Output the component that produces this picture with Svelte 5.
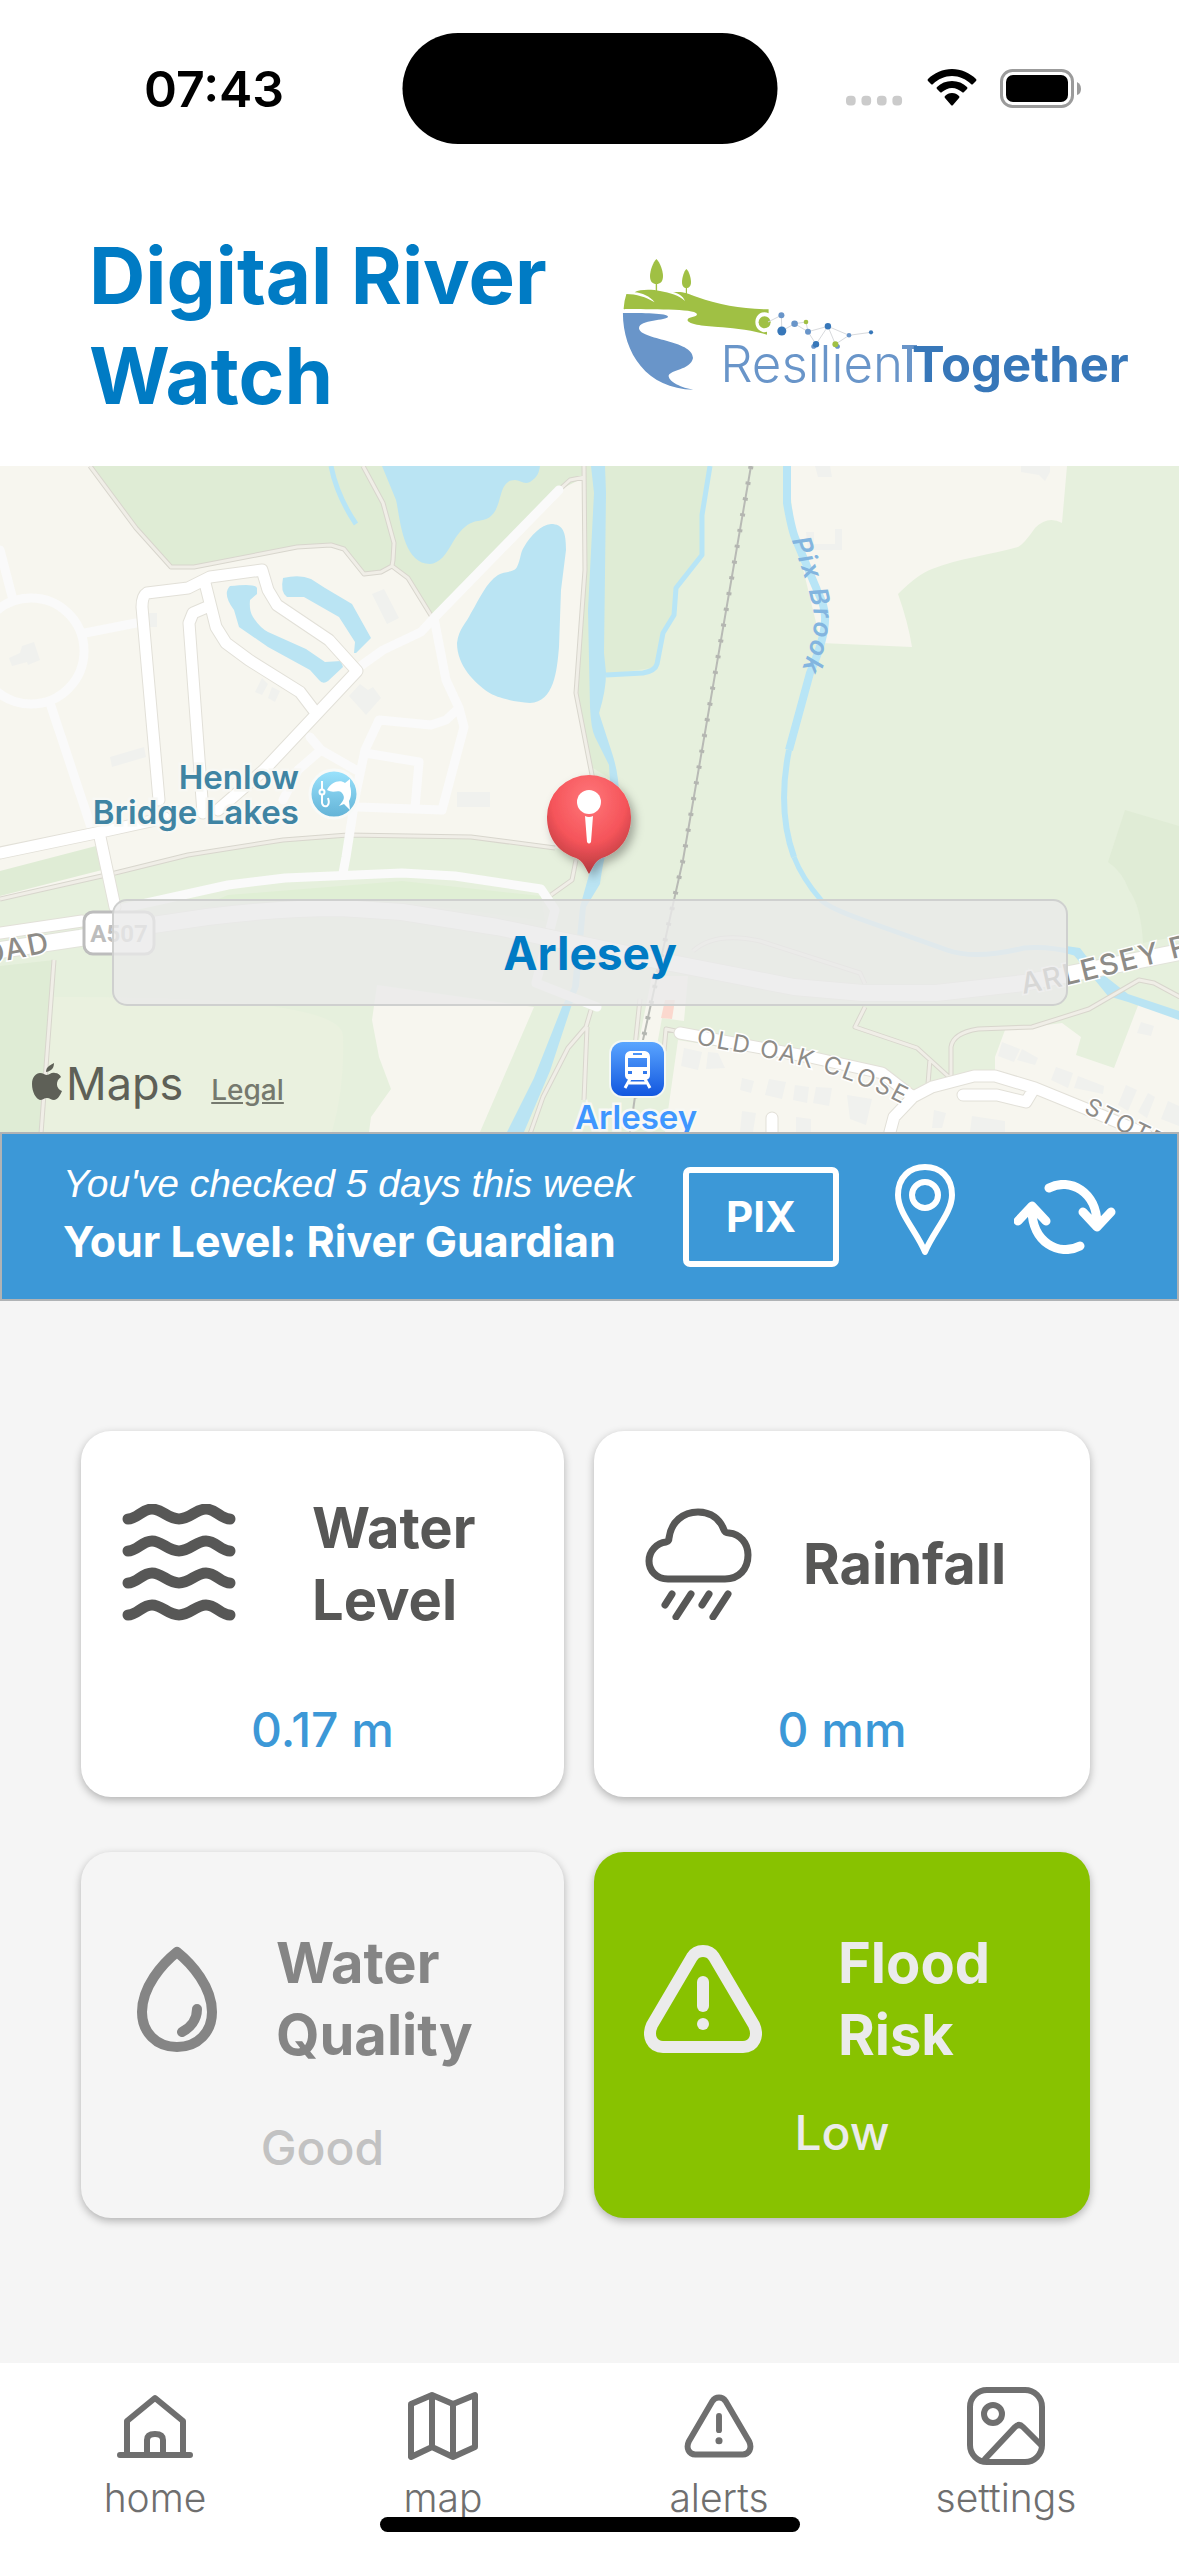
<script lang="ts">
	type Card = { id: string; lines: string[]; value: string };

	const cards: Card[] = [
		{ id: "level",    lines: ["Water", "Level"],   value: "0.17 m" },
		{ id: "rain",     lines: ["Rainfall"],         value: "0 mm" },
		{ id: "quality",  lines: ["Water", "Quality"], value: "Good" },
		{ id: "flood",    lines: ["Flood", "Risk"],    value: "Low" }
	];

	const tabs = ["home", "map", "alerts", "settings"];

	let daysChecked = $state(5);
	let level       = $state("River Guardian");
	let place       = $state("Arlesey");

	// logo network: x, y, radius, tone
	const nodes: [number, number, number, string][] = [
		[159.4, 60.3, 3, "light"],
		[159.8, 76, 4.5, "dark"],
		[172.6, 68.7, 3.3, "light"],
		[184, 67, 2.3, "leaf"],
		[186, 76.7, 3, "light"],
		[194, 89.3, 3.2, "dark"],
		[205.9, 71.3, 3.2, "dark"],
		[213.4, 89.3, 3, "leaf"],
		[227, 80.3, 2.3, "light"],
		[249, 77.3, 2.1, "dark"]
	];

	const casedRoads = [
		"M0 387L96 367L165 352",
		"M159 334L142 141Q142 130 147 127L188 122L210 111L262 104L268 124L277 139L329 174L357 205L264 304L218 344",
		"M205 117L216 161L226 177L249 194L300 226L316 247",
		"M207 141L193 147L189 157L203 347",
		"M100 371L115 441",
		"M680 567L810 591L882 607L913 631",
		"M890 666L894 651L913 631L932 621L974 610H995L1035 622L1089 644L1146 668",
		"M963 629H997L1026 636L1032 626",
		"M772 652V670",
		"M0 467L82 455"
	];

	const lightRoads = [
		"M0 84L13 134",
		"M85 167L136 157",
		"M50 237L92 364",
		"M559 24L434 152L421 166L383 184L362 199",
		"M434 152L446 214L459 242L464 261L442 344L358 341",
		"M459 242L446 254L431 259L379 254L365 284L356 327L346 391L343 407",
		"M365 287L419 296L415 342",
		"M310 271L321 284L356 304M321 284L298 304L283 334",
		"M115 444L228 419L285 412L402 407L455 410L541 423L555 444L536 517L597 541"
	];

	const tracks = [
		"M90 0L136 62L171 101H194L297 81L331 79L344 83L364 108L381 106L392 100L408 112L432 151",
		"M363 0L383 37L394 77L393 94L392 100",
		"M559 24L570 14L585 11M584 0L585 104L576 227L593 314",
		"M0 433L115 407L188 389L283 374L348 369L471 371L555 382",
		"M576 394L572 414L551 429",
		"M54 494L41 668",
		"M591 544L586 561L568 582L543 631L530 668M587 561L584 634",
		"M865 541L855 561L917 582L949 611M930 593L928 618",
		"M951 611V581Q953 567 978 563L1032 561L1089 543L1139 514L1154 517L1180 531",
		"M693 485Q715 465 760 475L860 507L865 518",
		"M640 533L633 600M680 566L666 563L664 585"
	];

	const buildings = [
		"M9 192L20 187L22 180L34 176L40 194L28 199L27 196L12 200Z",
		"M147 147H157V161H147Z",
		"M110 291L144 281L146 291L112 301Z",
		"M372 128L384 123L399 152L387 158Z",
		"M262 212L268 218L262 229L255 226ZM272 221L280 225L275 236L268 232Z",
		"M349 230L360 218L368 224L373 221L381 232L366 249Z",
		"M457 326H490V341H457Z",
		"M815 0H830L832 11H818ZM1021 0H1050V6L1045 15L1039 9L1021 6Z",
		"M806 66H814V78H835V63H842V84H808Z",
		"M684 582L702 586L698 604L681 600ZM708 586L718 587L725 602L706 603Z",
		"M742 612L754 615L751 627L740 624ZM769 613L786 616L782 633L765 629ZM795 619L809 621L807 637L793 634ZM816 621L832 622L829 640L813 637Z",
		"M847 629L872 633L866 659L850 653ZM742 645L756 647L753 666H740ZM796 651L811 653V666H796Z",
		"M1002 576L1020 583L1014 596L998 590ZM1022 583L1038 592L1035 599L1017 594Z",
		"M1056 601L1073 607L1068 622L1051 614ZM1078 610L1104 620L1103 628L1074 622Z",
		"M1126 619L1137 624L1128 645L1118 639ZM1148 627L1155 631L1147 652L1138 646ZM1168 635L1179 640V660L1161 653Z",
		"M1141 556L1154 560L1151 570L1137 567ZM934 644L946 647L942 662H932ZM972 650L1005 655V666H970Z"
	];
</script>

{#snippet cardIcon(id: string)}
	{#if id === "level"}
		<svg class="icon-level" viewBox="0 0 114 120" aria-hidden="true">
			{#each [15, 47, 79, 111] as y}
				<path d="M6 {y}C15 {y} 20 {y - 10} 30 {y - 10}C40 {y - 10} 46 {y} 57 {y}S74 {y - 10} 84 {y - 10}S99 {y} 108 {y}" />
			{/each}
		</svg>
	{:else if id === "rain"}
		<svg class="icon-rain" viewBox="0 0 108 112" aria-hidden="true">
			<path d="M23 71C11 71 4 62 4 53C4 43 12 35 21 34Q24 33 24 30C26 14 38 4 53 4C66 4 75 11 79 22Q80 25 84 25C95 26 103 35 103 47C103 61 94 71 80 71Z" />
			<path d="M27 86L20 97M46 86L31 109M64 86L57 97M83 86L68 109" />
		</svg>
	{:else if id === "quality"}
		<svg class="icon-quality" viewBox="0 0 82 107" aria-hidden="true">
			<path d="M41 6C56 18 76 41 76 66C76 86 62 101 41 101S6 86 6 66C6 41 26 18 41 6Z" />
			<path d="M61 63C61 74 54 82 46 86" />
		</svg>
	{:else}
		{@render warning("icon-flood")}
	{/if}
{/snippet}

{#snippet warning(name: string)}
	<svg class={name} viewBox="0 0 118 108" aria-hidden="true">
		<path d="M48 12C53 4 65 4 70 12L110 80C115 91 110 102 99 102H19C8 102 3 91 8 80Z" />
		<path d="M59 37V61" />
		<circle cx="59" cy="79" r="6" />
	</svg>
{/snippet}

<div class="screen">
	<!-- status bar -->
	<div class="status">
		<time class="clock">07:43</time>
		<div class="island"></div>
		<div class="signals">
			<svg class="dots" viewBox="0 0 60 38" aria-hidden="true">
				{#each [0, 16, 32, 48] as x}
					<rect {x} y="27" width="10" height="10" rx="4" />
				{/each}
			</svg>
			<svg class="wifi" viewBox="0 0 50 38" aria-hidden="true">
				<path d="M25 0C34 0 43 4 49 10Q50 11 49 12L46 15Q45 16 44 15C39 10 32 7 25 7S11 10 6 15Q5 16 4 15L1 12Q0 11 1 10C7 4 16 0 25 0Z" />
				<path d="M25 12C31 12 36 14 40 18Q41 19 40 20L37 23Q36 24 35 23C32 21 29 19 25 19S18 21 15 23Q14 24 13 23L10 20Q9 19 10 18C14 14 19 12 25 12Z" />
				<path d="M25 24C28 24 30 25 32 27Q33 28 32 29L26 36Q25 37 24 36L18 29Q17 28 18 27C20 25 22 24 25 24Z" />
			</svg>
			<svg class="battery" viewBox="0 0 82 40" aria-hidden="true">
				<rect x="1.5" y="1.5" width="71" height="36" rx="11" fill="none" stroke="#9b9b9b" stroke-width="3" />
				<rect x="6" y="6" width="62" height="27" rx="7" />
				<path d="M77 13Q81 15 81 20T77 26Z" fill="#9b9b9b" />
			</svg>
		</div>
	</div>

	<header class="header">
		<h1>Digital River Watch</h1>
		<svg class="logo" viewBox="0 0 510 145" role="img" aria-label="ResilienTogether">
			<g class="leaf">
				<path d="M34.4 4C38 7 41 16 41 21C41 27 38 29 34.4 29S28 27 28 21C28 16 31 7 34.4 4Z" />
				<path d="M64.4 14C67 16 69 23 69 27C69 31 67 33 64.4 33S60 31 60 27C60 23 62 16 64.4 14Z" />
				<path d="M33.7 28H35.1V37H33.7ZM63.8 32H65V39H63.8Z" />
				<path d="M4.4 39C14 39 24 42 32.6 47.3C28 41 20 38 12.6 37.3C18 34 31 34.5 38 36C48 38 57 40 63 46C61 41 56 38 51 37.3C59 36 65 38 75 42C98 50 120 54 146.6 54.3V58.3A9 10 0 1 0 145 76.7V79.7C126 74 108 73 96 72C80 71 66 69 65.5 65C66 61 75 63 75 59C72 53 28 55 1.6 54Q2 46 4.4 39Z" />
				<circle cx="142.6" cy="67.3" r="6" />
			</g>
			<path class="light" d="M.9 58C20 58 46 58 46 61.7C45 66 17 64 17 73.3C18 85 71 85 71 103C69 115 47 115 46.6 121C47 127 60 133 71.5 134.7C25 134 .9 98 .9 58Z" />
			<path class="links" d="M146 67L159.4 60.3L159.8 76L172.6 68.7L184 67L186 76.7L172.6 68.7M186 76.7L194 89.3L205.9 71.3L186 76.7M205.9 71.3L213.4 89.3L227 80.3L205.9 71.3M227 80.3L249 77.3" />
			<text class="logo-thin light" x="281" y="127">Resilien</text>
			<path class="light" d="M280 90H295V94H290V127H285V94H280Z" />
			<text class="logo-bold dark" x="290" y="127">Together</text>
			{#each nodes as [cx, cy, r, tone]}
				<circle {cx} {cy} {r} class={tone} />
			{/each}
		</svg>
	</header>

	<!-- map -->
	<section class="map" aria-label="Map of {place}">
		<svg class="tiles" viewBox="0 0 1179 666" preserveAspectRatio="xMidYMid slice" aria-hidden="true">
			<defs>
				<radialGradient id="pinFill" cx=".5" cy=".25" r=".8">
					<stop offset="0" stop-color="#ff777a" />
					<stop offset=".55" stop-color="#f5545a" />
					<stop offset="1" stop-color="#a63338" />
				</radialGradient>
				<linearGradient id="lakeFill" x2="0" y2="1">
					<stop offset="0" stop-color="#9be3fd" />
					<stop offset="1" stop-color="#62b2d6" />
				</linearGradient>
				<linearGradient id="railFill" x2="0" y2="1">
					<stop offset="0" stop-color="#5aa5ff" />
					<stop offset="1" stop-color="#1257df" />
				</linearGradient>
				<filter id="pinShadow" x="-30%" y="-30%" width="180%" height="180%">
					<feDropShadow dx="4" dy="5" stdDeviation="5" flood-opacity=".3" />
				</filter>
				<path id="brookLine" d="M792 74C799 98 810 122 814 150C815 172 806 194 794 222" />
				<path id="oakLine" d="M696 578C750 590 830 596 916 646" />
				<path id="stotLine" d="M1083 646C1110 660 1140 675 1260 735" />
				<path id="arleseyLine" d="M1023 528C1070 520 1110 508 1280 466" />
				<path id="roadLine" d="M-36 503L60 484" />
			</defs>

			<!-- land -->
			<rect width="1179" height="666" fill="#f7f6ef" />
			<path fill="#dfecd5" d="M90 0L136 62L171 101H194L297 81L331 79L344 83L364 108L381 106L392 100L408 112L432 151L559 24L585 11V0Z" />
			<path fill="#e6f0dd" d="M585 0H1179V666H0V433L115 407L188 389L283 374L348 369L471 371L555 382L593 390V314L576 227L585 104Z" />
			<path fill="#dfecd5" d="M585 0H710L702 49V89L676 122L674 149L663 167L657 201L606 209L599 250L612 314L590 300L577 227L585 104Z" />
			<path fill="#dfecd5" d="M0 405L96 380L102 404L0 430ZM0 500L54 494L41 666H0Z" />
			<path fill="#e0efd5" d="M228 429L402 415L541 430L545 455L402 436L200 441Z" />
			<path fill="#eaf1df" d="M54 531C180 531 343 535 343 570Q345 620 332 666H41Z" />
			<path fill="#e0ecd6" d="M1125 344L1179 360V470L1143 477Q1141 440 1129 424Q1122 405 1108 396Z" />
			<path fill="#f7f6ef" d="M787 0H1067L1062 57Q1048 49 1035 62Q1024 78 1018 81C990 89 960 92 932 103Q918 108 898 128Q908 156 912 181L821 177L796 74Z" />
			<path fill="#f7f6ef" d="M377 519L534 541L480 666H369L371 651L391 623L379 591L372 554Z" />
			<path fill="#f7f6ef" d="M678 574L882 607L913 631L947 614L995 604V591L1005 564L1062 557L1081 571L1076 589L1114 602L1139 537L1179 551V666H665Z" />
			<path fill="#f7f6ef" d="M652 510H688L684 555L662 552L655 590H636Z" />
			<path fill="#fbd8ce" d="M665 534H675L672 553L661 552Z" />
			<path fill="#f0f1ee" d={buildings.join("")} />

			<!-- water -->
			<g fill="#bae4f3">
				<path d="M382 0L396 34C400 50 402 98 430 98C448 96 450 73 465 61C475 52 485 57 492 49C503 38 498 14 515 14C520 14 524 19 530 16C538 11 539 6 540 0Z" />
				<path d="M551 58C563 58 566 66 566 84L561 124L559 181C557 205 554 236 530 237C515 236 497 232 488 226C475 217 457 200 457 177C459 162 466 158 471 147C480 132 486 117 498 109C504 105 514 107 517 101C521 93 520 87 524 81C531 69 541 59 551 58Z" />
				<path d="M230 120Q256 117 257 122V128L250 134Q249 145 253 151Q260 162 268 166L306 183L325 196L341 195L343 201L328 215Q323 219 319 214L310 204L268 181L239 161L234 144Q222 128 230 120Z" />
				<path d="M283 112Q300 108 311 113L325 122L352 138L371 172L356 187H354L355 176L339 151L304 131H287Q280 126 283 112Z" />
				<path d="M591 0L594 27L588 144L590 241Q591 263 595 271L609 299L611 330L580 441L572 521L562 541L534 612L507 666H524L550 605L571 541L579 520L586 441L600 418Q603 395 606 388L619 330Q619 308 612 287L599 247Q606 225 606 207L604 187L606 27L605 0Z" />
				<path d="M1066 480L1080 482L1096 503L1128 528L1179 545V554L1128 536L1108 530L1090 508Z" />
			</g>
			<g class="stream">
				<path d="M331 0Q337 30 356 58M710 0L702 49V89L676 122L674 149L663 167L657 198Q655 205 643 207L606 209" stroke-width="5" />
				<path d="M787 0V37Q792 66 796 74L817 124Q825 140 825 151Q826 170 810 207L789 284" stroke-width="8" />
				<path d="M789 284Q777 344 794 391" stroke-width="6" />
				<path d="M794 391Q802 412 821 434Q829 442 863 454L947 484Q975 494 1024 482Q1050 480 1075 487" stroke-width="5" />
			</g>

			<!-- tracks and roads -->
			<path class="track-case" d={tracks.join("")} />
			<path class="track" d={tracks.join("")} />
			<path class="road-light" d={lightRoads.join("")} />
			<circle class="road-light" cx="31" cy="185" r="53" />
			<path class="road-case" d={casedRoads.join("")} />
			<path class="road" d={casedRoads.join("")} />
			<path class="main-case" d="M0 484L80 472L153 459L207 451Q280 442 340 442L402 446L497 461L656 494L794 521L863 527H936L1024 517L1180 486" />
			<path class="main" d="M0 484L80 472L153 459L207 451Q280 442 340 442L402 446L497 461L656 494L794 521L863 527H936L1024 517L1180 486" />
			<path class="rail" d="M751 0L683 394L674 434L643 574L630 666" />
			<path class="sleepers" d="M751 0L683 394L674 434L643 574L630 666" />

			<!-- road and river names -->
			<text class="brook-name"><textPath href="#brookLine">Pix Brook</textPath></text>
			<text class="road-name"><textPath href="#oakLine">OLD OAK CLOSE</textPath></text>
			<text class="road-name"><textPath href="#stotLine">STOTFOLD</textPath></text>
			<text class="road-name strong"><textPath href="#arleseyLine">ARLESEY ROAD</textPath></text>
			<text class="road-name strong"><textPath href="#roadLine">ROAD</textPath></text>
			<rect x="84" y="446" width="70" height="42" rx="9" fill="#fff" stroke="#bdbdbd" stroke-width="3" />
			<text class="shield" x="119" y="476">A507</text>

			<!-- Henlow Bridge Lakes -->
			<text class="lake-name" x="299" y="323">Henlow</text>
			<text class="lake-name" x="299" y="358">Bridge Lakes</text>
			<circle cx="334" cy="328" r="24" fill="url(#lakeFill)" stroke="#f8faf8" stroke-width="3" />
			<path fill="#fff" d="M327 324C331 316 340 313 345 317L350 313V320C352 326 351 332 349 335L350 344L344 338L339 340C343 335 346 332 342 327C338 323 334 328 327 324Z" />
			<path fill="none" stroke="#fff" stroke-width="2" d="M322 315V323M322 328V337Q323 341 327 340Q330 338 328 332" />
			<circle cx="322" cy="326" r="2.5" fill="none" stroke="#fff" stroke-width="2" />

			<!-- pin -->
			<g filter="url(#pinShadow)">
				<path fill="url(#pinFill)" d="M589 408C585 401 583 395 576 392C557 386 547 370 547 351A42 42 0 0 1 631 351C631 370 621 386 602 392C595 395 593 401 589 408Z" />
			</g>
			<circle cx="589" cy="336" r="12" fill="#fff" />
			<path fill="#fff" d="M585 350Q589 352 593 350L591 376Q589 379 587 376Z" />

			<!-- station -->
			<rect x="611" y="576" width="53" height="54" rx="12" fill="url(#railFill)" stroke="#f4f8f4" stroke-width="4" paint-order="stroke" />
			<path fill="#fff" fill-rule="evenodd" d="M630 585H645Q650 586 650 591V609Q650 613 646 614H629Q625 613 625 609V591Q625 586 630 585ZM633 587V589H642V587ZM628 592V601H647V592ZM628 605V608H632V605ZM643 605V608H647V605Z" />
			<path stroke="#fff" stroke-width="3" d="M630 613L625 622M645 613L650 622M629 617H646" />
			<text class="station-name" x="636" y="663">Arlesey</text>
		</svg>

		<div class="place">{place}</div>

		<div class="credits">
			<svg class="apple" viewBox="0 0 30 37" aria-hidden="true">
				<path d="M22 0Q22 5 19 7T14 9Q14 5 17 3T22 0ZM15 12C18 12 19 9 23 10C26 10 28 12 29 14C23 18 24 26 30 28C28 33 25 37 22 37C19 37 18 35 15 35S11 37 8 37C4 36 0 29 0 21C0 14 4 10 8 10C11 10 13 12 15 12Z" />
			</svg>
			<span class="maps">Maps</span>
			<a class="legal" href="#legal">Legal</a>
		</div>
	</section>

	<!-- progress bar -->
	<section class="progress">
		<div class="streak">
			<p class="days">You've checked {daysChecked} days this week</p>
			<p class="level">Your Level: {level}</p>
		</div>
		<button class="pix" type="button">PIX</button>
		<button class="tool" type="button" aria-label="Choose location">
			<svg class="icon-pin" viewBox="0 0 60 92" aria-hidden="true">
				<path d="M30 88C22 68 3 49 3 31C3 13 15 3 30 3S57 13 57 31C57 49 38 68 30 88Z" />
				<circle cx="30" cy="31" r="13" />
			</svg>
		</button>
		<button class="tool" type="button" aria-label="Refresh">
			<svg class="icon-refresh" viewBox="0 0 102 74" aria-hidden="true">
				<path d="M35 8C56 -3 83 12 83 44M69 32L83 47L97 32" />
				<path d="M66 66C45 77 18 62 18 30M4 41L18 26L32 41" />
			</svg>
		</button>
	</section>

	<main class="cards">
		{#each cards as card (card.id)}
			<article class="card {card.id}">
				<div class="card-head">
					{@render cardIcon(card.id)}
					<h2>
						{#each card.lines as line}
							<span>{line}</span>
						{/each}
					</h2>
				</div>
				<p class="value">{card.value}</p>
			</article>
		{/each}
	</main>

	<nav class="tabs">
		{#each tabs as tab}
			<a class="tab" href="#{tab}">
				<span class="tab-icon">
					{#if tab === "home"}
						<svg class="icon-home" viewBox="0 0 76 65" aria-hidden="true">
							<path d="M3 61H73M10 61V27L38 4L66 27V61M30 61V46Q30 40 38 40T46 46V61" />
						</svg>
					{:else if tab === "map"}
						<svg class="icon-map" viewBox="0 0 70 70" aria-hidden="true">
							<path d="M3 13L24 4L45 13L67 4V56L45 66L24 56L3 66ZM24 4V56M45 13V66" />
						</svg>
					{:else if tab === "alerts"}
						{@render warning("icon-alerts")}
					{:else}
						<svg class="icon-settings" viewBox="0 0 78 78" aria-hidden="true">
							<rect x="3" y="3" width="72" height="72" rx="17" />
							<circle cx="26" cy="27" r="9" />
							<path d="M18 72L48 40Q52 36 56 40L74 58" />
						</svg>
					{/if}
				</span>
				{tab}
			</a>
		{/each}
		<div class="indicator"></div>
	</nav>
</div>

<style>
	:global(body) {
		margin: 0;
		background: #f5f5f5;
	}

	.screen {
		display: flex;
		flex-direction: column;
		min-height: 100vh;
		font-family: Inter, "Liberation Sans", sans-serif;
		color: #575756;
	}

	h1, h2, p {
		margin: 0;
	}

	svg {
		display: block;
		flex-shrink: 0;
	}

	button {
		font: inherit;
		color: inherit;
		background: none;
		cursor: pointer;
	}

	/* ── Status bar ─────────────────────────────────────────────────────── */
	.status {
		position: relative;
		display: flex;
		justify-content: space-between;
		align-items: center;
		height: 178px;
		padding: 0 97px 0 144px;
		box-sizing: border-box;
		background: #fff;
	}

	.clock {
		font-size: 50px;
		font-weight: 600;
		color: #000;
	}

	.island {
		position: absolute;
		top: 33px;
		left: 50%;
		width: 375px;
		height: 111px;
		border-radius: 56px;
		background: #000;
		transform: translateX(-50%);
	}

	.signals {
		display: flex;
		gap: 23px;
	}

	.dots { width: 58px; height: 38px; fill: #cbcbcb; }
	.wifi { width: 50px; height: 38px; }
	.battery { width: 82px; height: 40px; }

	/* ── Header ─────────────────────────────────────────────────────────── */
	.header {
		display: flex;
		justify-content: space-between;
		align-items: flex-start;
		padding: 48px 47px 40px 89px;
		background: #fff;
	}

	h1 {
		max-width: 500px;
		font-size: 78px;
		line-height: 100px;
		font-weight: 700;
		color: #007bc4;
	}

	.logo {
		width: 510px;
		height: 145px;
		margin-top: 29px;
	}

	.leaf { fill: #a0c044; }
	.light { fill: #6995c9; }
	.dark { fill: #3777b9; }
	.links { fill: none; stroke: #d8dadd; stroke-width: 1; }
	.logo-thin { font-size: 51px; font-weight: 300; text-anchor: end; }
	.logo-bold { font-size: 49px; font-weight: 700; }

	/* ── Map ────────────────────────────────────────────────────────────── */
	.map {
		position: relative;
	}

	.tiles {
		width: 100%;
		height: 666px;
	}

	.stream { fill: none; stroke: #b8e5f6; stroke-linejoin: round; }
	.track-case, .track, .road-light, .road-case, .road, .main-case, .main, .rail, .sleepers {
		fill: none;
		stroke-linejoin: round;
	}
	.track-case { stroke: #d8d6cd; stroke-width: 5; }
	.track { stroke: #f0eee7; stroke-width: 3; }
	.road-light { stroke: #fafafa; stroke-width: 9; stroke-linecap: round; }
	.road-case { stroke: #e2e0d8; stroke-width: 13; stroke-linecap: round; }
	.road { stroke: #fff; stroke-width: 11; stroke-linecap: round; }
	.main-case { stroke: #e2e3da; stroke-width: 18; }
	.main { stroke: #fff; stroke-width: 16; }
	.rail { stroke: #b8bab5; stroke-width: 2; }
	.sleepers { stroke: #b4b6b1; stroke-width: 5; stroke-dasharray: 3 13; }

	.brook-name {
		font-size: 26px;
		font-style: italic;
		font-weight: 600;
		letter-spacing: 2px;
		fill: #83b5df;
	}

	.road-name {
		font-size: 24px;
		letter-spacing: 2px;
		fill: #8e8c88;
		stroke: #fff;
		stroke-width: 3px;
		paint-order: stroke;
	}

	.road-name.strong { font-size: 29px; font-weight: 500; }

	.shield {
		font-family: Roboto, sans-serif;
		font-size: 24px;
		font-weight: 700;
		text-anchor: middle;
		fill: #bdbdbd;
	}

	.lake-name {
		font-size: 33px;
		font-weight: 600;
		text-anchor: end;
		fill: #3f84a3;
		stroke: #f8f8f4;
		stroke-width: 5px;
		paint-order: stroke;
	}

	.station-name {
		font-size: 33px;
		font-weight: 600;
		text-anchor: middle;
		fill: #3f97ff;
		stroke: #f8f8f4;
		stroke-width: 5px;
		paint-order: stroke;
	}

	.place {
		position: absolute;
		top: 433px;
		left: 112px;
		right: 111px;
		height: 107px;
		box-sizing: border-box;
		border: 2px solid #cfd0cf;
		border-radius: 15px;
		background: rgba(234, 234, 234, 0.8);
		font-size: 46px;
		line-height: 104px;
		font-weight: 700;
		text-align: center;
		color: #007bc4;
	}

	.credits {
		position: absolute;
		left: 32px;
		bottom: 20px;
		display: flex;
		align-items: baseline;
		color: #5e6057;
	}

	.apple { width: 30px; height: 37px; fill: #5e6057; }
	.maps { margin-left: 4px; font-size: 45px; line-height: 56px; }
	.legal { margin-left: 28px; font-size: 28px; font-weight: 500; color: #75796e; }

	/* ── Progress bar ───────────────────────────────────────────────────── */
	.progress {
		display: flex;
		align-items: center;
		height: 169px;
		padding: 0 61px;
		box-sizing: border-box;
		border: 2px solid #b0b3b5;
		background: #3c98d7;
		color: #fff;
	}

	.streak {
		flex: 1;
		padding-bottom: 6px;
		white-space: nowrap;
	}

	.days {
		font-family: "Liberation Sans", sans-serif;
		font-size: 39px;
		line-height: 54px;
		font-style: italic;
	}

	.level {
		font-size: 43px;
		line-height: 60px;
		font-weight: 700;
	}

	.pix {
		width: 156px;
		height: 100px;
		margin-right: 56px;
		padding: 0;
		border: 6px solid #fff;
		border-radius: 7px;
		font-size: 42px;
		font-weight: 700;
	}

	.tool {
		padding: 0;
		border: 0;
	}

	.tool + .tool { margin-left: 59px; }
	.tool svg { fill: none; stroke: #fff; stroke-linecap: round; stroke-linejoin: round; }
	.icon-pin { width: 60px; height: 92px; margin-bottom: 14px; stroke-width: 6; }
	.icon-refresh { width: 102px; height: 74px; stroke-width: 9; }

	/* ── Cards ──────────────────────────────────────────────────────────── */
	.cards {
		flex: 1;
		display: grid;
		grid-template-columns: 483fr 496fr;
		align-content: start;
		gap: 55px 30px;
		padding: 130px 89px 60px 81px;
	}

	.card {
		height: 366px;
		padding-top: 61px;
		box-sizing: border-box;
		border-radius: 30px;
		background: #fff;
		box-shadow: 0 3px 9px rgba(0, 0, 0, 0.28);
	}

	.card-head {
		display: flex;
		align-items: center;
		height: 144px;
	}

	h2 {
		font-size: 56px;
		line-height: 72px;
		font-weight: 700;
	}

	h2 span { display: block; }

	.value {
		margin-top: 62px;
		font-size: 48px;
		line-height: 64px;
		font-weight: 500;
		text-align: center;
		color: #3c98d7;
	}

	.card-head svg {
		fill: none;
		stroke: currentColor;
		stroke-linecap: round;
		stroke-linejoin: round;
	}

	.icon-level { width: 114px; height: 120px; margin: 0 76px 0 41px; stroke-width: 11; }
	.icon-rain { width: 108px; height: 112px; margin: 0 50px 0 51px; stroke-width: 7; }
	.icon-quality { width: 82px; height: 107px; margin: 0 58px 0 55px; stroke-width: 10; }
	.icon-flood { width: 118px; height: 108px; margin: 0 76px 0 50px; stroke-width: 12; }
	.icon-flood circle, .icon-alerts circle { fill: currentColor; stroke: none; }

	.quality, .flood { padding-top: 75px; }
	.quality .value { margin-top: 45px; color: #c2c2c2; }
	.quality { background: #f5f5f5; color: #858585; }
	.flood { background: #88c200; color: #ebebeb; }
	.flood .value { margin-top: 30px; color: #ebebeb; }

	/* ── Tabs ───────────────────────────────────────────────────────────── */
	.tabs {
		position: relative;
		display: grid;
		grid-template-columns: 288fr 288fr 264fr 310fr;
		height: 193px;
		padding: 0 18px 0 11px;
		box-sizing: border-box;
		background: #fff;
	}

	.tab {
		display: flex;
		flex-direction: column;
		align-items: center;
		padding-top: 22px;
		font-size: 39px;
		line-height: 46px;
		font-weight: 300;
		color: #6f6f6f;
		text-decoration: none;
	}

	.tab-icon {
		display: grid;
		place-items: center;
		height: 82px;
		margin-bottom: 8px;
	}

	.tab-icon svg {
		fill: none;
		stroke: currentColor;
		stroke-width: 6;
		stroke-linecap: round;
		stroke-linejoin: round;
	}

	.icon-home { width: 76px; height: 65px; }
	.icon-map { width: 70px; height: 70px; }
	.tab-icon .icon-alerts { width: 70px; height: 64px; stroke-width: 10; }
	.icon-settings { width: 78px; height: 78px; }

	.indicator {
		position: absolute;
		left: 50%;
		bottom: 24px;
		width: 420px;
		height: 15px;
		border-radius: 8px;
		background: #000;
		transform: translateX(-50%);
	}
</style>
